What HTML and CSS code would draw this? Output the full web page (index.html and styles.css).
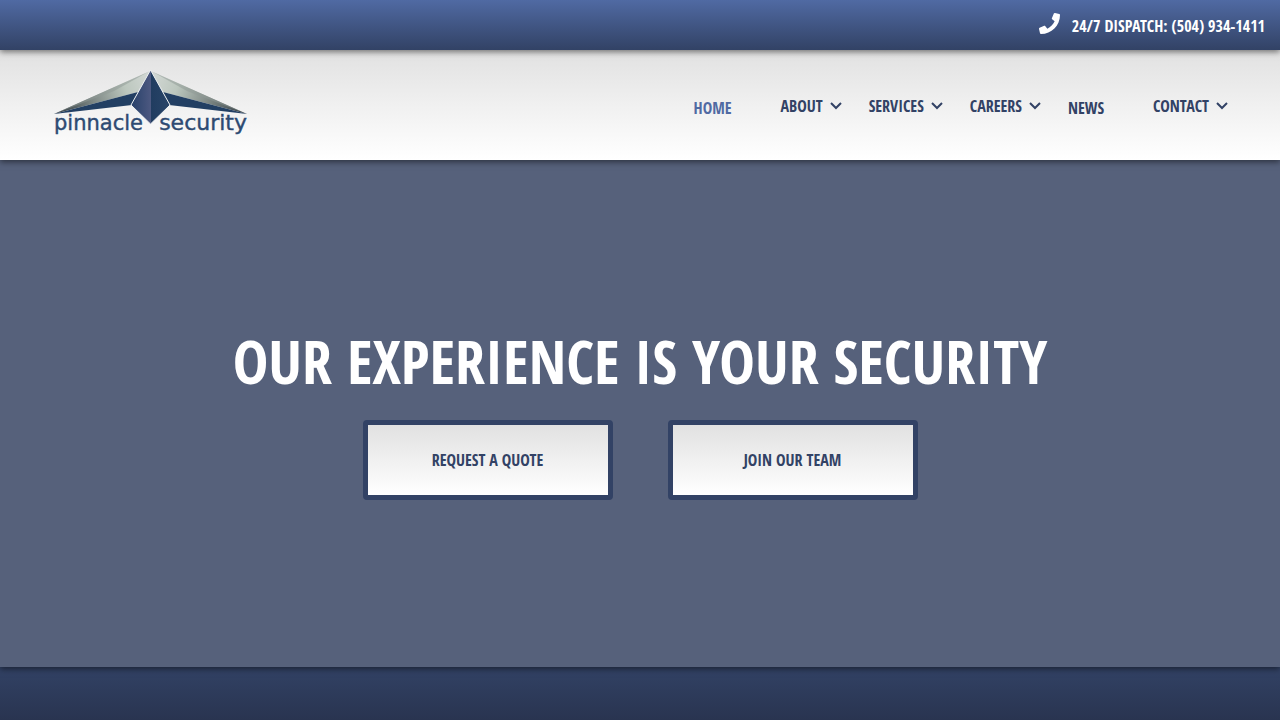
FILE: index.html
```html
<!DOCTYPE html>
<html lang="en">
<head>
<meta charset="UTF-8">
<meta name="viewport" content="width=device-width, initial-scale=1.0">
<title>Pinnacle Security</title>
<link rel="stylesheet" href="styles.css">
</head>
<body>

<div class="top-bar">
    <a class="dispatch" href="tel:5049341411">
        <svg class="phone-icon" viewBox="0 0 512 512" aria-hidden="true">
            <path fill="currentColor" d="M493.4 24.6l-104-24c-11.3-2.6-22.9 3.3-27.5 13.9l-48 112c-4.2 9.8-1.4 21.3 6.9 28l60.6 49.600c-36 76.700-98.900 140.500-177.200 177.200l-49.600-60.600c-6.800-8.300-18.200-11.100-28-6.900l-112 48C3.900 366.500-2 378.100.6 389.400l24 104C27.100 504.200 36.700 512 48 512c256.100 0 464-207.500 464-464 0-11.200-7.700-20.900-18.600-23.400z"/>
        </svg>
        <span>24/7 DISPATCH: (504) 934-1411</span>
    </a>
</div>

<header class="header">
    <a class="logo" href="#" aria-label="Pinnacle Security">
        <svg viewBox="0 0 200 70" aria-hidden="true">
            <defs>
                <linearGradient id="wingLeft" gradientUnits="userSpaceOnUse" x1="5" y1="46" x2="98" y2="10">
                    <stop offset="0" stop-color="#2e383f"/>
                    <stop offset="0.4" stop-color="#7d8784"/>
                    <stop offset="0.75" stop-color="#bcc7be"/>
                    <stop offset="1" stop-color="#d0d6d2"/>
                </linearGradient>
                <linearGradient id="wingRight" gradientUnits="userSpaceOnUse" x1="197" y1="46" x2="104" y2="10">
                    <stop offset="0" stop-color="#2e383f"/>
                    <stop offset="0.4" stop-color="#7d8784"/>
                    <stop offset="0.75" stop-color="#bcc7be"/>
                    <stop offset="1" stop-color="#d0d6d2"/>
                </linearGradient>
                <linearGradient id="gem">
                    <stop offset="0" stop-color="#27416a"/>
                    <stop offset="0.5" stop-color="#4c5880"/>
                    <stop offset="0.5" stop-color="#203c60"/>
                    <stop offset="1" stop-color="#294568"/>
                </linearGradient>
            </defs>
            <path fill="url(#wingLeft)" d="M4 46L100 3L88 24Z"/>
            <path fill="#8f9995" opacity="0.5" d="M4 46L98 4L64 23Z"/>
            <path fill="url(#wingRight)" d="M197 46L101 3L113 24Z"/>
            <path fill="#8f9995" opacity="0.5" d="M197 46L103 4L137 23Z"/>
            <path fill="#223f63" d="M4 46L88 24L82 37Z"/>
            <path fill="#223f63" d="M197 46L113 24L119 37Z"/>
            <path fill="url(#gem)" stroke="#eef1f2" stroke-width="1" d="M100.500 2L120 37L100.500 56L81 37Z"/>
            <text class="logo-text" x="4" y="62" font-size="21">pinnacle</text>
            <text class="logo-text" x="197" y="62" font-size="22" text-anchor="end">security</text>
        </svg>
    </a>
    <nav class="nav">
        <a class="nav-link active" href="#">HOME</a>
        <a class="nav-menu" href="#">ABOUT <svg class="chevron" viewBox="0 0 12 8" aria-hidden="true"><path d="M1 1l5 5 5-5"/></svg></a>
        <a class="nav-menu" href="#">SERVICES <svg class="chevron" viewBox="0 0 12 8" aria-hidden="true"><path d="M1 1l5 5 5-5"/></svg></a>
        <a class="nav-menu" href="#">CAREERS <svg class="chevron" viewBox="0 0 12 8" aria-hidden="true"><path d="M1 1l5 5 5-5"/></svg></a>
        <a class="nav-link" href="#">NEWS</a>
        <a class="nav-menu" href="#">CONTACT <svg class="chevron" viewBox="0 0 12 8" aria-hidden="true"><path d="M1 1l5 5 5-5"/></svg></a>
    </nav>
</header>

<main class="hero">
    <h1>OUR EXPERIENCE IS YOUR SECURITY</h1>
    <div class="hero-buttons">
        <button type="button">REQUEST A QUOTE</button>
        <button type="button">JOIN OUR TEAM</button>
    </div>
</main>

<section class="band"></section>

</body>
</html>
```
FILE: styles.css
```css
* {
    box-sizing: border-box;
}
body {
    margin: 0;
    min-height: 100vh;
    display: flex;
    flex-direction: column;
    font-family: "Open Sans Condensed", "Open Sans", sans-serif;
    font-size: 16px;
    font-weight: 700;
    line-height: 24px;
    color: #324265;
    background-color: #56617b;
}
a {
    color: inherit;
    text-decoration: none;
}
.top-bar {
    position: relative;
    z-index: 3;
    display: flex;
    justify-content: flex-end;
    align-items: center;
    height: 50px;
    padding: 0 15px;
    color: #fff;
    background: linear-gradient(#506aa3, #324265);
    box-shadow: 0 2px 6px rgba(0, 0, 0, 0.5);
}
.dispatch {
    display: flex;
    align-items: center;
    gap: 12px;
}
.dispatch span {
    padding-top: 2px;
}
.phone-icon {
    width: 21px;
    height: 21px;
    margin-bottom: 3px;
}
.header {
    position: relative;
    z-index: 2;
    display: flex;
    justify-content: space-between;
    align-items: center;
    height: 110px;
    padding: 0 52px 0 50px;
    background: linear-gradient(#e1e1e1, #fff);
    box-shadow: 0 2px 6px rgba(0, 0, 0, 0.5);
}
.logo {
    padding-bottom: 4px;
}
.logo svg {
    display: block;
    width: 200px;
    height: 70px;
}
.logo-text {
    font-family: "DejaVu Sans", sans-serif;
    font-weight: 400;
    fill: #2d4a72;
    stroke: #2d4a72;
    stroke-width: 0.4;
}
.nav {
    display: flex;
    align-items: center;
    gap: 27px;
}
.nav-link {
    padding: 6px 22px 0 0;
}
.nav-menu {
    display: flex;
    align-items: center;
    gap: 7px;
    padding-top: 2px;
}
.active {
    color: #506aa3;
}
.chevron {
    width: 12px;
    height: 8px;
    fill: none;
    stroke: #324265;
    stroke-width: 2;
}
.hero {
    position: relative;
    z-index: 1;
    flex: 1;
    display: flex;
    flex-direction: column;
    align-items: center;
    justify-content: center;
    padding: 20px 20px 28px;
    text-align: center;
    background-color: #56617b;
    box-shadow: 0 2px 6px rgba(0, 0, 0, 0.5);
}
.hero h1 {
    margin: 0 0 18px;
    font-size: 60px;
    font-weight: 800;
    line-height: 82px;
    color: #fff;
}
.hero-buttons {
    display: flex;
    flex-wrap: wrap;
    justify-content: center;
    gap: 55px;
}
.hero-buttons button {
    width: 250px;
    height: 80px;
    font: inherit;
    color: #324265;
    background: linear-gradient(#e1e1e1, #fff);
    border: 5px solid #324265;
    border-radius: 4px;
    cursor: pointer;
}
.band {
    height: 53px;
    background: linear-gradient(#324265, #293450);
}
```
